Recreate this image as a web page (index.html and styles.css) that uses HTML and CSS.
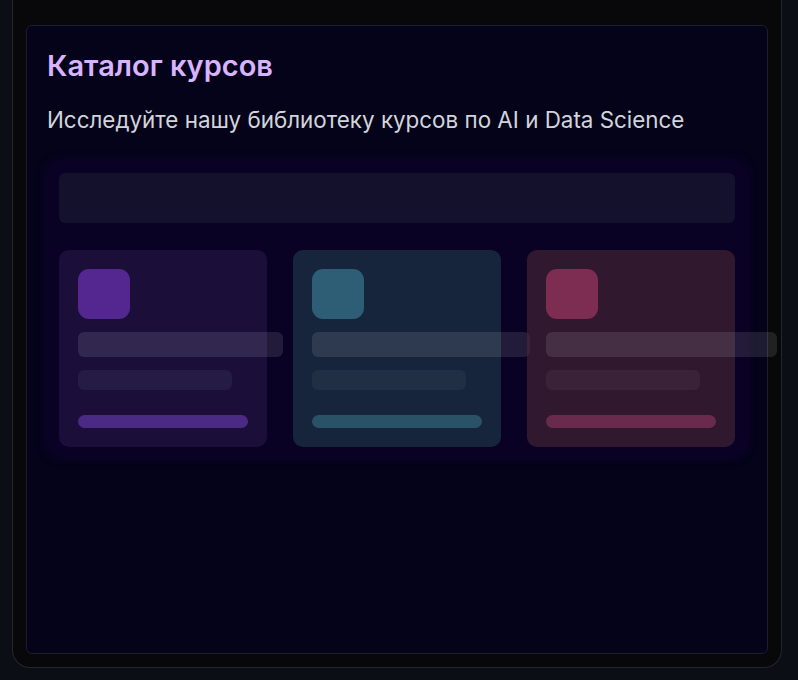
FILE: index.html
```html
<!DOCTYPE html>
<html lang="ru">
<head>
<meta charset="utf-8">
<title>Каталог курсов</title>
<link rel="stylesheet" href="styles.css">
</head>
<body>
<div class="frame">
  <section class="panel">
    <h1 class="title">Каталог курсов</h1>
    <p class="subtitle">Исследуйте нашу библиотеку курсов по AI и Data Science</p>
    <div class="mockup">
      <div class="searchbar"></div>
      <div class="cards">
        <div class="card card-purple">
          <div class="icon"></div>
          <div class="line line-1" style="width:205px"></div>
          <div class="line line-2"></div>
          <div class="bar"></div>
        </div>
        <div class="card card-teal">
          <div class="icon"></div>
          <div class="line line-1" style="width:218px"></div>
          <div class="line line-2"></div>
          <div class="bar"></div>
        </div>
        <div class="card card-pink">
          <div class="icon"></div>
          <div class="line line-1" style="width:231px"></div>
          <div class="line line-2"></div>
          <div class="bar"></div>
        </div>
      </div>
    </div>
  </section>
</div>
</body>
</html>
```
FILE: styles.css
```css
* { box-sizing: border-box; }
html, body { margin: 0; padding: 0; }
body {
  background: #0b0e14;
  font-family: Inter, "Noto Sans", sans-serif;
  width: 798px;
  height: 680px;
  overflow: hidden;
}
.frame {
  margin-left: 12px;
  width: 770px;
  height: 668px;
  background: #08080b;
  border: 1px solid #24262c;
  border-top: none;
  border-radius: 0 0 18px 18px;
  padding: 25px 13px 13px 13px;
}
.panel {
  height: 629px;
  background: #05031a;
  border: 1px solid #1f1c30;
  border-radius: 6px;
  padding: 20px 19px;
}
.title {
  margin: 0 0 0 1px;
  font-size: 29px;
  line-height: 40px;
  font-weight: 600;
  color: #d8b4fe;
}
.subtitle {
  margin: 18px 0 0 1px;
  font-size: 22.4px;
  line-height: 32px;
  color: #d1d5db;
  font-weight: 400;
}
.mockup {
  margin-top: 24px;
  background: #0a0224;
  border-radius: 16px;
  padding: 13px 13px 11px 13px;
  box-shadow: 0 0 10px 1px rgba(20, 4, 60, 0.4);
}
.searchbar {
  height: 50px;
  background: #13112b;
  border-radius: 6px;
}
.cards {
  margin-top: 27px;
  display: grid;
  grid-template-columns: repeat(3, 208px);
  gap: 26px;
}
.card {
  height: 197px;
  border-radius: 10px;
  padding: 19px;
  display: flex;
  flex-direction: column;
  align-items: flex-start;
  position: relative;
}
.icon {
  width: 52px;
  height: 51px;
  border-radius: 11px;
}
.line {
  border-radius: 6px;
  flex-shrink: 0;
}
.line-1 {
  height: 25px;
  margin-top: 13px;
  background: rgba(255, 255, 255, 0.1);
}
.line-2 {
  width: 154px;
  height: 20px;
  margin-top: 13px;
  background: rgba(255, 255, 255, 0.05);
}
.bar {
  width: 170px;
  height: 13px;
  margin-top: 25px;
  border-radius: 7px;
}
.card-purple { background: #1b0f3a; }
.card-purple .icon { background: #54268f; }
.card-purple .bar { background: #4a2a85; }
.card-teal { background: rgba(34, 70, 84, 0.5); }
.card-teal .icon { background: #2d5e75; }
.card-teal .bar { background: #2a5266; }
.card-pink { background: rgba(80, 44, 56, 0.55); }
.card-pink .icon { background: #7d2c52; }
.card-pink .bar { background: #6a2a4d; }
```
